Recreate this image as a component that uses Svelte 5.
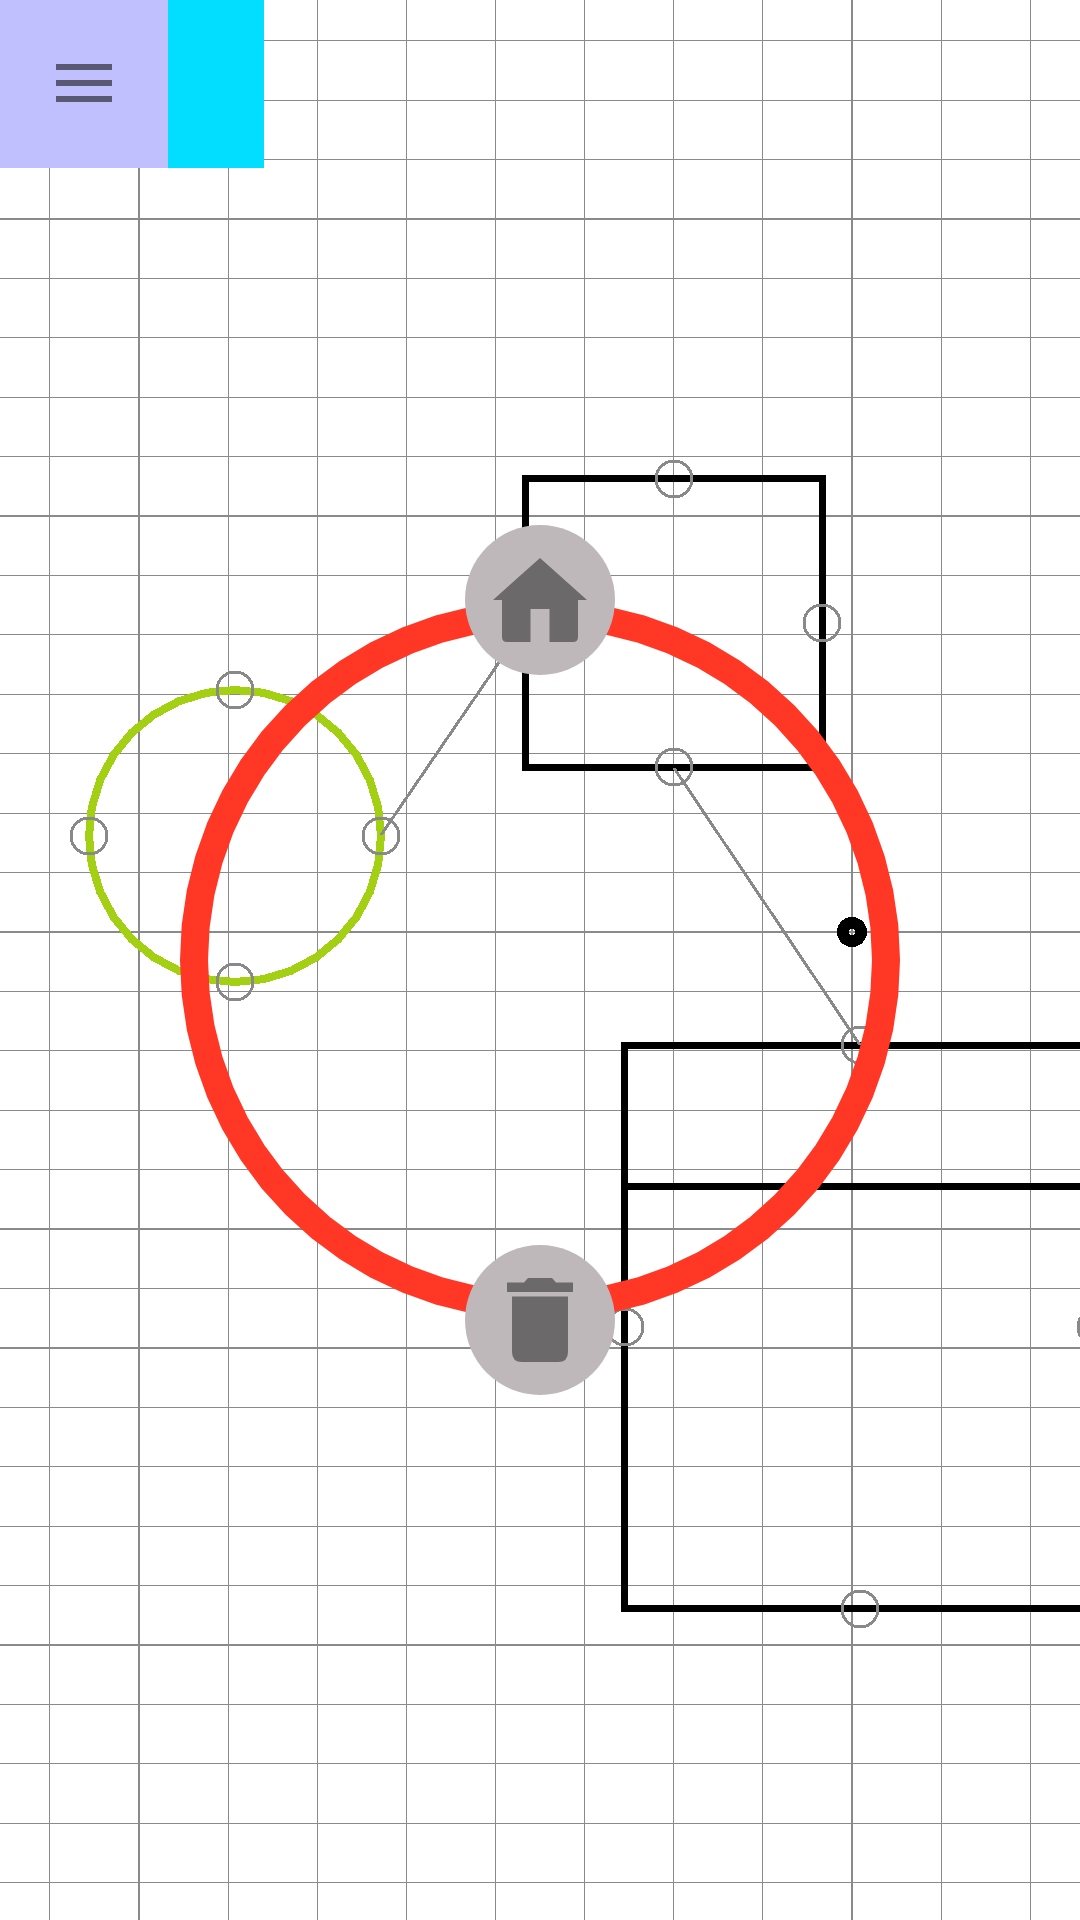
<script>
  const STEP_X = 713 / 8;
  const STEP_Y = 713 / 12;
  const majorCols = [0, 8];
  const majorRows = [0, 5, 12, 17, 19, 24];

  // Major lines are two pixels thick and centred; minor ones fill one pixel.
  function gridLines(origin, step, first, count, majors) {
    return Array.from({ length: count }, (_, i) => {
      const k = i + first;
      const pos = origin + k * step;
      return majors.includes(k)
        ? { at: Math.round(pos) - 1, size: 2 }
        : { at: Math.floor(pos), size: 1 };
    });
  }

  const cols = gridLines(139, STEP_X, -1, 40, majorCols);
  const rows = gridLines(219, STEP_Y, -3, 60, majorRows);

  function polygon(cx, cy, r, sides) {
    return Array.from({ length: sides }, (_, i) => {
      const a = (i * 2 * Math.PI) / sides;
      return `${cx + r * Math.sin(a)},${cy - r * Math.cos(a)}`;
    }).join(' ');
  }

  const handles = [
    [674, 479], [822, 623], [674, 767], [526, 623],
    [235, 690], [89, 836], [381, 836], [235, 982],
    [860, 1045], [625, 1327], [1096, 1327], [860, 1609],
  ];
</script>

<main>
  <svg class="board" role="img" aria-label="Diagram canvas">
    <g class="grid">
      {#each cols as c}
        <rect x={c.at} y="0" width={c.size} height="100%" />
      {/each}
      {#each rows as r}
        <rect x="0" y={r.at} width="100%" height={r.size} />
      {/each}
    </g>
    <g class="shape">
      <path d="M525.5 478.5H822.5V767.5H525.5Z" />
      <path d="M624.5 1045.5H1096V1608.5H624.5ZM624.5 1186.5H1096" />
      <polygon class="green" points={polygon(235, 836, 146, 32)} />
    </g>
    <g class="thin">
      {#each handles as [x, y]}
        <circle cx={x} cy={y} r="18" />
      {/each}
      <path d="M381 835L526 623M674 768L860 1045" />
    </g>
    <circle class="dot" cx="852" cy="932" r="9" />
  </svg>

  <header>
    <button class="menu" aria-label="Menu">
      <svg width="56" height="38" viewBox="0 0 56 38"><path d="M0 0h56v6H0zM0 16h56v6H0zM0 32h56v6H0z" /></svg>
    </button>
    <button class="swatch" aria-label="Colour"></button>
  </header>

  <nav class="radial" aria-label="Shape actions">
    <svg class="ring" viewBox="-360 -360 720 720" aria-hidden="true">
      <polygon points={polygon(0, 0, 346, 64)} />
    </svg>
    <button class="action home" aria-label="Home">
      <svg width="94" height="84" viewBox="0 0 94 84"><path d="M47 0L94 42H85V79Q85 84 80 84H56.500V51H37.500V84H14Q9 84 9 79V42H0Z" /></svg>
    </button>
    <button class="action trash" aria-label="Delete">
      <svg width="66" height="84" viewBox="0 0 66 84"><path d="M0 4.500H17L21 0H45L49 4.500H66V14H0ZM5 18.500H61V74Q61 84 51 84H15Q5 84 5 74Z" /></svg>
    </button>
  </nav>
</main>

<style>
  :global(body) {
    margin: 0;
    background: #fff;
  }
  main {
    position: relative;
    display: grid;
    place-items: center;
    min-height: 100vh;
    overflow: hidden;
    background: #fff;
  }
  button {
    display: grid;
    place-items: center;
    padding: 0;
    border: 0;
    cursor: pointer;
  }
  .board {
    position: absolute;
    inset: 0;
    width: 100%;
    height: 100%;
    shape-rendering: crispEdges;
  }
  .grid {
    fill: #8a8a8a;
  }
  .shape {
    fill: none;
    stroke: #000;
    stroke-width: 7px;
  }
  .green {
    stroke: #a3d013;
    stroke-width: 8px;
  }
  .thin {
    fill: none;
    stroke: #8a898a;
    stroke-width: 3px;
  }
  .dot {
    fill: none;
    stroke: #000;
    stroke-width: 12px;
  }
  header {
    position: absolute;
    top: 0;
    left: 0;
    display: flex;
    height: 168px;
  }
  .menu {
    width: 168px;
    background: #c0bfff;
    fill: #595973;
  }
  .menu svg {
    margin-bottom: 2px;
  }
  .swatch {
    width: 96px;
    background: #02deff;
  }
  .radial {
    position: relative;
    display: flex;
    flex-direction: column;
    align-items: center;
    justify-content: space-between;
    width: 720px;
    height: 870px;
  }
  .ring {
    position: absolute;
    top: 75px;
    left: 0;
    width: 720px;
    height: 720px;
    overflow: visible;
    fill: none;
    stroke: #ff3724;
    stroke-width: 28px;
    pointer-events: none;
  }
  .action {
    position: relative;
    width: 150px;
    height: 150px;
    border-radius: 50%;
    background: #beb8ba;
    fill: #6b696a;
  }
</style>
